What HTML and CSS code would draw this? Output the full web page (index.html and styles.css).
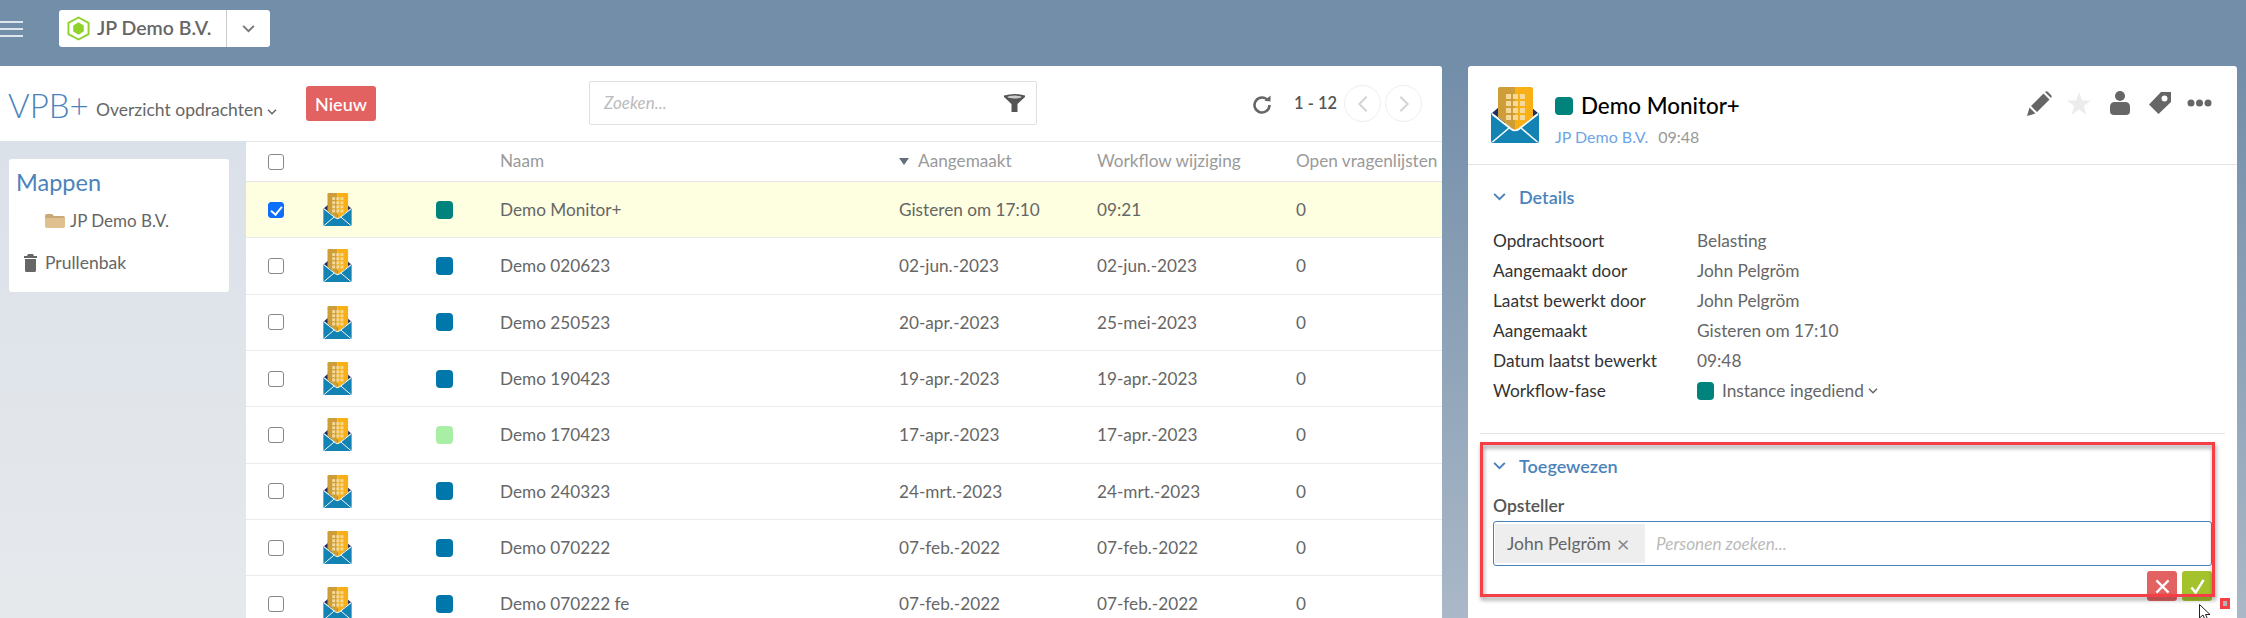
FILE: index.html
```html
<!DOCTYPE html>
<html lang="nl">
<head>
<meta charset="utf-8">
<title>VPB+ Overzicht opdrachten</title>
<link rel="stylesheet" href="styles.css">
</head>
<body>
<svg class="defs" width="0" height="0" aria-hidden="true">
  <symbol id="env" viewBox="0 0 48 56">
    <path fill="#1f2f66" d="M1 26 8 20V36H40V20L47 26 24 42z"/>
    <path fill="#1283b3" d="M0 26 24 44 48 26V54Q48 56 46 56H2Q0 56 0 54z"/>
    <path fill="#cd9d38" d="M7 2Q7 0 9 0H24V44L7 30z"/>
    <path fill="#f9b016" d="M24 0H40Q42 0 42 2V30L24 44z"/>
    <g fill="#f4d998">
      <rect x="15" y="7" width="5" height="5"/><rect x="22" y="7" width="5" height="5"/><rect x="29" y="7" width="5" height="5"/>
      <rect x="15" y="14" width="5" height="5"/><rect x="22" y="14" width="5" height="5"/><rect x="29" y="14" width="5" height="5"/>
      <rect x="15" y="21" width="5" height="5"/><rect x="22" y="21" width="5" height="5"/><rect x="29" y="21" width="5" height="5"/>
      <rect x="15" y="28" width="5" height="5"/><rect x="22" y="28" width="5" height="5"/><rect x="29" y="28" width="5" height="5"/>
    </g>
    <path fill="none" stroke="#fff" stroke-width="1.6" d="M1 27 20 42Q24 45 28 42L47 27M1.500 55 18 41M46.500 55 30 41"/>
  </symbol>
  <symbol id="chev" viewBox="0 0 14 9">
    <path fill="none" stroke="currentColor" stroke-width="2.200" d="M1 1 7 7 13 1"/>
  </symbol>
</svg>

<div class="app">
  <header class="topbar">
    <button class="burger" type="button" aria-label="Menu"><i></i><i></i><i></i></button>
    <div class="org">
      <span class="org-main">
        <svg class="hex" viewBox="0 0 24 26"><path fill="none" stroke="#8fd32a" stroke-width="2" d="M12 1.500 22.500 7.200V18.800L12 24.500 1.500 18.800V7.200z"/><path fill="#8fd32a" d="M12 6.500 17.500 9.800V16.200L12 19.500 6.500 16.200V9.800z"/></svg>
        JP Demo B.V.
      </span>
      <span class="org-caret"><svg class="chev-top"><use href="#chev"/></svg></span>
    </div>
  </header>

  <main class="content">
    <section class="list-panel">
      <div class="toolbar">
        <div class="toolbar-left">
          <span class="brand">VPB+</span>
          <span class="view">Overzicht opdrachten <svg class="chev-sm"><use href="#chev"/></svg></span>
          <button class="new" type="button">Nieuw</button>
        </div>
        <div class="search">
          <span class="search-ph">Zoeken...</span>
          <svg class="funnel" viewBox="0 0 21 18"><path fill="#555" d="M0 1.500Q10.500-1.500 21 1.500V3L13.500 10V18H7.500V10L0 3z"/><ellipse cx="10.500" cy="3" rx="7" ry="1.400" fill="#ccc"/></svg>
        </div>
        <div class="pager">
          <svg class="refresh" viewBox="0 0 20 20"><path fill="none" stroke="#666" stroke-width="2.600" d="M16 6.500A7.500 7.500 0 1 0 17.500 11"/><path fill="#666" d="M12.500 6.800 18.500 7.500 18.500 1.500z"/></svg>
          <span class="range">1 - 12</span>
          <button class="circle" type="button" aria-label="Vorige"><svg viewBox="0 0 12 20"><path fill="none" stroke="#d5d5d5" stroke-width="2.400" d="M10 2 2 10 10 18"/></svg></button>
          <button class="circle" type="button" aria-label="Volgende"><svg viewBox="0 0 12 20"><path fill="none" stroke="#d5d5d5" stroke-width="2.400" d="M2 2 10 10 2 18"/></svg></button>
        </div>
      </div>

      <div class="list-body">
        <aside class="sidebar">
          <nav class="folders">
            <h2>Mappen</h2>
            <div class="folder">
              <svg class="folder-ico" viewBox="0 0 20 14"><path fill="#c9a876" d="M0 2Q0 0 2 0H7L9 2H18Q20 2 20 4V5H0z"/><path fill="#e0c08f" d="M0 4H20V12Q20 14 18 14H2Q0 14 0 12z"/></svg>
              JP Demo B.V.
            </div>
            <div class="trash">
              <svg class="trash-ico" viewBox="0 0 13 18"><path fill="#666" d="M4 0H9L10 2H13V4H0V2H3zM1 5H12V16.500Q12 18 10.500 18H2.500Q1 18 1 16.500z"/></svg>
              Prullenbak
            </div>
          </nav>
        </aside>

        <div class="table">
          <div class="row head">
            <span class="c-check"><input class="cb" type="checkbox" aria-label="Alles"></span>
            <span></span><span></span>
            <span>Naam</span>
            <span><i class="sort"></i>Aangemaakt</span>
            <span>Workflow wijziging</span>
            <span class="nowrap">Open vragenlijsten</span>
          </div>
          <div class="row selected">
            <span class="c-check"><input class="cb" type="checkbox" checked aria-label="Selecteer"></span>
            <svg class="env-sm"><use href="#env"/></svg>
            <i class="dot teal"></i>
            <span>Demo Monitor+</span><span>Gisteren om 17:10</span><span>09:21</span><span>0</span>
          </div>
          <div class="row">
            <span class="c-check"><input class="cb" type="checkbox" aria-label="Selecteer"></span>
            <svg class="env-sm"><use href="#env"/></svg>
            <i class="dot blue"></i>
            <span>Demo 020623</span><span>02-jun.-2023</span><span>02-jun.-2023</span><span>0</span>
          </div>
          <div class="row">
            <span class="c-check"><input class="cb" type="checkbox" aria-label="Selecteer"></span>
            <svg class="env-sm"><use href="#env"/></svg>
            <i class="dot blue"></i>
            <span>Demo 250523</span><span>20-apr.-2023</span><span>25-mei-2023</span><span>0</span>
          </div>
          <div class="row">
            <span class="c-check"><input class="cb" type="checkbox" aria-label="Selecteer"></span>
            <svg class="env-sm"><use href="#env"/></svg>
            <i class="dot blue"></i>
            <span>Demo 190423</span><span>19-apr.-2023</span><span>19-apr.-2023</span><span>0</span>
          </div>
          <div class="row">
            <span class="c-check"><input class="cb" type="checkbox" aria-label="Selecteer"></span>
            <svg class="env-sm"><use href="#env"/></svg>
            <i class="dot green"></i>
            <span>Demo 170423</span><span>17-apr.-2023</span><span>17-apr.-2023</span><span>0</span>
          </div>
          <div class="row">
            <span class="c-check"><input class="cb" type="checkbox" aria-label="Selecteer"></span>
            <svg class="env-sm"><use href="#env"/></svg>
            <i class="dot blue"></i>
            <span>Demo 240323</span><span>24-mrt.-2023</span><span>24-mrt.-2023</span><span>0</span>
          </div>
          <div class="row">
            <span class="c-check"><input class="cb" type="checkbox" aria-label="Selecteer"></span>
            <svg class="env-sm"><use href="#env"/></svg>
            <i class="dot blue"></i>
            <span>Demo 070222</span><span>07-feb.-2022</span><span>07-feb.-2022</span><span>0</span>
          </div>
          <div class="row">
            <span class="c-check"><input class="cb" type="checkbox" aria-label="Selecteer"></span>
            <svg class="env-sm"><use href="#env"/></svg>
            <i class="dot blue"></i>
            <span>Demo 070222 fe</span><span>07-feb.-2022</span><span>07-feb.-2022</span><span>0</span>
          </div>
        </div>
      </div>
    </section>

    <section class="detail-panel">
      <div class="detail-head">
        <svg class="env-lg"><use href="#env"/></svg>
        <div class="detail-title">
          <h1><i class="dot dot-lg teal"></i>Demo Monitor+</h1>
          <p><a>JP Demo B.V.</a><span>09:48</span></p>
        </div>
        <div class="actions">
          <svg class="a-pencil" viewBox="0 0 25 25"><path fill="#666" d="M0 25 2.500 16.500 8.500 22.500zM4 15 16.500 2.500 22.500 8.500 10 21zM18 1Q19.500-.300 21 1L24 4Q25.300 5.500 24 7z"/></svg>
          <svg class="a-star" viewBox="0 0 24 23"><path fill="#ececec" d="M12 0 15 8.500H24L16.800 14 19.400 23 12 17.600 4.600 23 7.200 14 0 8.500H9z"/></svg>
          <svg class="a-person" viewBox="0 0 20 24"><circle cx="10" cy="5" r="5" fill="#666"/><path fill="#666" d="M0 16Q0 11 5 11H15Q20 11 20 16V20Q20 24 16 24H4Q0 24 0 20z"/></svg>
          <svg class="a-tag" viewBox="0 0 22 22"><path fill="#666" fill-rule="evenodd" d="M0 12.500 12 0H22V10L9.500 22zM15.500 3.500A3 3 0 1 0 15.510 9.500 3 3 0 0 0 15.500 3.500z"/></svg>
          <svg class="a-dots" viewBox="0 0 25 8"><circle cx="4" cy="4" r="3.500" fill="#666"/><circle cx="12.500" cy="4" r="3.500" fill="#666"/><circle cx="21" cy="4" r="3.500" fill="#666"/></svg>
        </div>
      </div>

      <div class="section details">
        <h3 class="section-title"><svg class="chev-sec"><use href="#chev"/></svg>Details</h3>
        <dl class="facts">
          <dt>Opdrachtsoort</dt><dd>Belasting</dd>
          <dt>Aangemaakt door</dt><dd>John Pelgröm</dd>
          <dt>Laatst bewerkt door</dt><dd>John Pelgröm</dd>
          <dt>Aangemaakt</dt><dd>Gisteren om 17:10</dd>
          <dt>Datum laatst bewerkt</dt><dd>09:48</dd>
          <dt>Workflow-fase</dt><dd class="phase"><i class="dot teal"></i>Instance ingediend <svg class="chev-sm"><use href="#chev"/></svg></dd>
        </dl>
      </div>

      <div class="section assigned">
        <h3 class="section-title"><svg class="chev-sec"><use href="#chev"/></svg>Toegewezen</h3>
        <label class="field-label">Opsteller</label>
        <div class="people">
          <span class="chip">John Pelgröm <b>×</b></span>
          <span class="people-ph">Personen zoeken...</span>
        </div>
        <div class="confirm">
          <button class="btn-x" type="button" aria-label="Annuleren"><svg viewBox="0 0 16 16"><path fill="none" stroke="#fff" stroke-width="2.400" d="M1.500 1.500 14.500 14.500M14.500 1.500 1.500 14.500"/></svg></button>
          <button class="btn-ok" type="button" aria-label="Bevestigen"><svg viewBox="0 0 16 16"><path fill="none" stroke="#fff" stroke-width="2.600" d="M1.500 9 6 14.500 14.500 1"/></svg></button>
        </div>
      </div>
    </section>
  </main>
</div>

<div class="annot-box"></div>
<div class="annot-handle"></div>
<svg class="cursor" viewBox="0 0 12 18"><path fill="#fff" stroke="#222" d="M.5.500V14L4 11 6.500 17 9 16 6.500 10.500H11z"/></svg>
</body>
</html>
```
FILE: styles.css
```css
* { box-sizing: border-box; }
html, body { margin: 0; height: 100%; }
body {
  position: relative;
  overflow: hidden;
  font: 17.200px/1.25 Lato, "Liberation Sans", sans-serif;
  color: #666;
  background: linear-gradient(#738ea9 0, #738ea9 66px, #aab8c7 100%);
}
.defs { position: absolute; }
i { font-style: normal; }
button { font-family: inherit; padding: 0; cursor: pointer; }

.app { height: 618px; display: flex; flex-direction: column; }

/* top bar */
.topbar { height: 66px; flex: none; display: flex; align-items: center; padding-bottom: 9px; }
.burger { width: 23px; height: 16px; margin-right: 36px; background: none; border: 0; display: flex; flex-direction: column; justify-content: space-between; }
.burger i { display: block; height: 2px; width: 23px; background: #dfe5ec; }
.org { width: 211px; height: 37px; background: #fff; border-radius: 3px; display: flex; }
.org-main { flex: 1; display: flex; align-items: center; gap: 7px; padding-left: 8px; font-size: 19.500px; font-weight: 600; color: #666; border-right: 1px solid #ccc; white-space: nowrap; }
.hex { width: 23px; height: 25px; }
.org-caret { width: 43px; display: flex; align-items: center; justify-content: center; color: #777; }
.chev-top { width: 13px; height: 8px; }

/* panels */
.content { flex: 1; min-height: 0; display: flex; }
.list-panel { width: 1442px; background: #fff; border-radius: 0 3px 0 0; display: flex; flex-direction: column; overflow: hidden; }
.detail-panel { width: 769px; margin-left: 26px; background: #fff; border-radius: 3px 3px 0 0; overflow: hidden; }

/* toolbar */
.toolbar { height: 75px; flex: none; display: flex; align-items: flex-start; }
.toolbar-left { width: 589px; flex: none; display: flex; align-items: flex-start; padding-left: 8px; }
.brand { font-size: 33px; font-weight: 300; line-height: 38px; margin-top: 20px; color: #4a83bb; width: 88px; }
.view { font-size: 17.500px; line-height: 22px; margin-top: 33px; color: #666; width: 210px; white-space: nowrap; }
.chev-sm { width: 10px; height: 6px; vertical-align: 1px; color: #666; }
.new { width: 70px; height: 35px; margin-top: 20px; background: #e26262; color: #fff; border: 0; border-radius: 3px; font-size: 18px; font-weight: 500; }
.search { width: 448px; height: 44px; margin-top: 15px; flex: none; border: 1px solid #e0e0e0; border-radius: 2px; display: flex; align-items: center; justify-content: space-between; padding: 0 11px 0 14px; }
.search-ph { font-style: italic; color: #bbb; font-size: 17px; }
.funnel { width: 21px; height: 18px; }
.pager { flex: 1; display: flex; align-items: center; height: 37px; margin-top: 19px; padding-left: 215px; }
.refresh { width: 20px; height: 20px; margin-right: 22px; }
.range { width: 50px; font-size: 16.500px; font-weight: 600; color: #555; white-space: nowrap; }
.circle { width: 37px; height: 37px; margin-right: 4px; border: 1px solid #eee; border-radius: 50%; background: #fff; display: flex; align-items: center; justify-content: center; }
.circle svg { width: 12px; height: 18px; }

/* body of list */
.list-body { flex: 1; min-height: 0; display: flex; }
.sidebar { width: 246px; flex: none; padding: 18px 17px 0 9px; background: linear-gradient(#dbe1e9, #e6e9ec); }
.folders { height: 133px; background: #fff; border-radius: 3px; padding: 8px 7px 0; }
.folders h2 { margin: 0; font-size: 23.500px; line-height: 30px; font-weight: 400; color: #4a83bb; }
.folder { margin: 12px 0 0 29px; display: flex; align-items: center; gap: 5px; font-size: 17px; line-height: 24px; white-space: nowrap; }
.folder-ico { width: 20px; height: 14px; }
.trash { margin: 18px 0 0 8px; display: flex; align-items: center; gap: 8px; font-size: 17.500px; line-height: 24px; }
.trash-ico { width: 13px; height: 18px; }

/* table */
.table { flex: 1; min-width: 0; border-top: 1px solid #e5e5e5; overflow: hidden; }
.row {
  display: grid;
  grid-template-columns: 77px 113px 64px 399px 198px 199px 146px;
  align-items: center;
  height: 56.330px;
  border-bottom: 1px solid #ebebeb;
  white-space: nowrap;
}
.row.head { height: 40px; color: #9a9a9a; border-bottom-color: #e5e5e5; padding-bottom: 2px; }
.row.selected { background: #fefee0; }
.nowrap { white-space: nowrap; }
.c-check { padding-left: 22px; display: flex; }
.row.head .c-check { padding-top: 2px; }
.cb { appearance: none; margin: 0; width: 16px; height: 16px; border: 1.500px solid #888; border-radius: 3px; background: #fff; position: relative; }
.cb:checked { background: #0b6efd; border-color: #0b6efd; }
.cb:checked::after { content: ""; position: absolute; left: 4px; top: 1px; width: 5px; height: 9px; border: solid #fff; border-width: 0 2px 2px 0; transform: rotate(40deg); }
.sort { display: inline-block; width: 0; height: 0; margin-right: 9px; vertical-align: 2px; border: 5.500px solid transparent; border-top: 7px solid #666e7a; border-bottom: 0; }
.env-sm { width: 29px; height: 33px; }
.dot { display: block; width: 17px; height: 18px; border-radius: 4px; }
.teal { background: #00837c; }
.blue { background: #0077aa; }
.green { background: #a8eea5; }

/* detail header */
.detail-head { height: 99px; display: flex; padding: 21px 25px 0 23px; border-bottom: 1px solid #e3e3e3; }
.env-lg { width: 48px; height: 56px; flex: none; }
.detail-title { margin-left: 16px; flex: 1; }
.detail-title h1 { margin: 6px 0 0; font-size: 22.400px; line-height: 26px; font-weight: 500; color: #000; display: flex; align-items: center; gap: 8px; }
.dot-lg { width: 18px; height: 18px; }
.detail-title p { margin: 8px 0 0; font-size: 16px; line-height: 20px; color: #999; }
.detail-title a { color: #6ea5e5; margin-right: 10px; }
.actions { display: flex; align-items: center; height: 32px; margin-top: 0; }
.a-pencil { width: 25px; height: 25px; margin-right: 15px; }
.a-star { width: 24px; height: 23px; margin-right: 19px; }
.a-person { width: 20px; height: 24px; margin-right: 19px; }
.a-tag { width: 22px; height: 22px; margin-right: 16px; }
.a-dots { width: 25px; height: 8px; }

/* sections */
.section { padding: 0 25px 0 25px; }
.section-title { margin: 0; display: flex; align-items: center; gap: 13px; font-size: 18px; line-height: 22px; font-weight: 600; color: #4a83bb; }
.chev-sec { width: 13px; height: 8px; color: #4a83bb; }
.details { margin: 0 12px; padding: 21px 13px 0; height: 269px; border-bottom: 1px solid #e3e3e3; }
.facts { margin: 18px 0 0; display: grid; grid-template-columns: 204px 1fr; grid-auto-rows: 30px; align-items: center; font-size: 17.300px; }
.facts dt { color: #333; }
.facts dd { margin: 0; color: #666; }
.phase { display: flex; align-items: center; gap: 8px; }
.phase .chev-sm { margin-left: -4px; }
.assigned { padding-top: 21px; }
.field-label { display: block; margin-top: 18px; font-size: 17.500px; line-height: 22px; font-weight: 600; color: #555; }
.people { margin-top: 4px; height: 45px; width: 719px; border: 1px solid #4a83bb; border-radius: 3px; padding: 2px 1px; display: flex; align-items: stretch; }
.chip { width: 150px; background: #eee; display: flex; align-items: center; padding-left: 12px; gap: 6px; white-space: nowrap; color: #666; font-size: 17.500px; }
.chip b { font-weight: 400; font-size: 22px; line-height: 1; color: #888; }
.people-ph { margin-left: 11px; align-self: center; font-style: italic; color: #bbb; }
.confirm { width: 719px; margin-top: 5px; display: flex; justify-content: flex-end; gap: 5px; }
.confirm button { width: 30px; height: 30px; border: 0; border-radius: 3px; display: flex; align-items: center; justify-content: center; }
.confirm svg { width: 15px; height: 15px; }
.btn-x { background: #e26262; }
.btn-ok { background: #a4c22c; }

/* annotation overlay */
.annot-box { position: absolute; left: 1480px; top: 442px; width: 735px; height: 155px; border: 3px solid #f53e46; filter: drop-shadow(1px 3px 2px rgba(0, 0, 0, .4)); }
.annot-handle { position: absolute; left: 2220px; top: 598px; width: 10px; height: 11px; background: #b5b5b5; border: 3px solid #f53e46; }
.cursor { position: absolute; left: 2199px; top: 604px; width: 12px; height: 18px; }
```
